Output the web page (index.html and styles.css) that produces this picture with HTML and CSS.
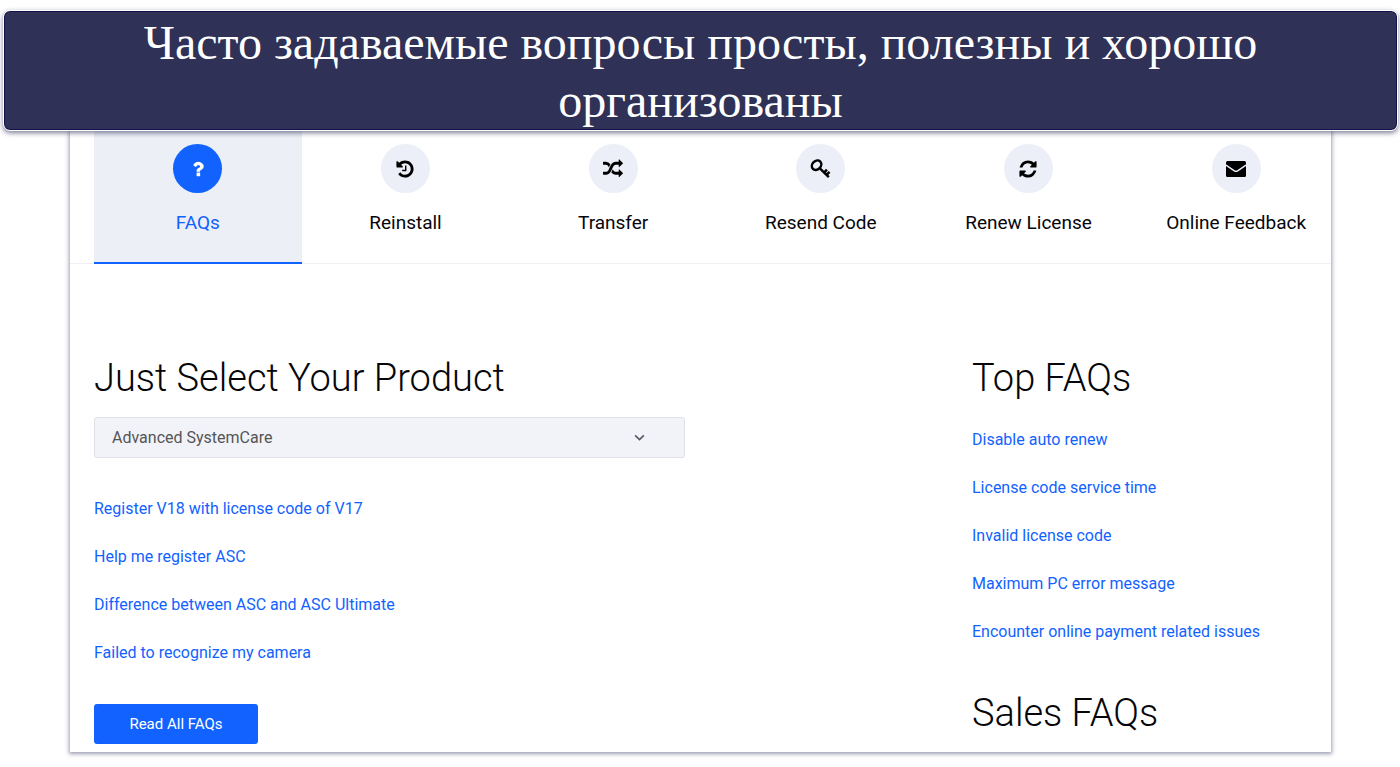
FILE: index.html
```html
<!DOCTYPE html>
<html lang="ru">
<head>
<meta charset="utf-8">
<title>FAQs</title>
<link rel="stylesheet" href="styles.css">
</head>
<body>
<header class="banner"><h1 class="banner-text">Часто задаваемые вопросы просты, полезны и хорошо организованы</h1></header>
<main class="panel">
  <nav class="tabs">
    <a class="tab tab-active" href="#faqs"><span class="tab-icon"><svg viewBox="0 0 1792 1792"><path d="M1088 1256v240q0 16-12 28t-28 12h-240q-16 0-28-12t-12-28v-240q0-16 12-28t28-12h240q16 0 28 12t12 28zm316-600q0 54-15.5 101t-35 76.5-55 59.5-57.5 43.5-61 35.5q-41 23-68.5 65t-27.5 67q0 17-12 32.5t-28 15.5h-240q-15 0-25.5-18.5t-10.5-37.5v-45q0-83 65-156.5t143-108.5q59-27 84-56t25-76q0-42-46.5-74t-107.5-32q-65 0-108 29-35 25-107 115-13 16-31 16-12 0-25-8l-164-125q-13-10-15.5-25t5.5-28q160-266 464-266 80 0 161 31t146 83 106 127.5 41 158.5z"/></svg></span>FAQs</a>
    <a class="tab" href="#reinstall"><span class="tab-icon"><svg viewBox="0 0 1792 1792"><path d="M1664 896q0 156-61 298t-164 245-245 164-298 61q-172 0-327-72.5t-264-204.5q-7-10-6.5-22.5t8.5-20.5l137-138q10-9 25-9 16 2 23 12 73 95 179 147t225 52q104 0 198.5-40.5t163.5-109.5 109.5-163.5 40.5-198.5-40.5-198.5-109.5-163.5-163.5-109.5-198.5-40.5q-98 0-188 35.5t-160 101.5l137 138q31 30 14 69-17 40-59 40h-448q-26 0-45-19t-19-45v-448q0-42 40-59 39-17 69 14l130 129q107-101 244.5-156.5t284.5-55.5q156 0 298 61t245 164 164 245 61 298zm-640-288v448q0 14-9 23t-23 9h-320q-14 0-23-9t-9-23v-64q0-14 9-23t23-9h224v-352q0-14 9-23t23-9h64q14 0 23 9t9 23z"/></svg></span>Reinstall</a>
    <a class="tab" href="#transfer"><span class="tab-icon"><svg viewBox="0 0 1792 1792"><path d="M666 481q-60 92-137 273-22-45-37-72.5t-40.5-63.5-51-56.5-63-35-81.5-14.5h-224q-14 0-23-9t-9-23v-192q0-14 9-23t23-9h224q250 0 410 225zm1126 799q0 14-9 23l-320 320q-9 9-23 9-13 0-22.5-9.5t-9.5-22.5v-192q-32 0-85 .5t-81 1-73-1-71-5-64-10.5-63-18.5-58-28.5-59-40-55-53.5-56-69.5q59-93 136-273 22 45 37 72.5t40.5 63.5 51 56.5 63 35 81.5 14.5h256v-192q0-14 9-23t23-9q12 0 24 10l319 319q9 9 9 23zm0-896q0 14-9 23l-320 320q-9 9-23 9-13 0-22.5-9.5t-9.5-22.5v-192h-256q-48 0-87 15t-69 45-51 61.5-45 77.5q-32 62-78 171-29 66-49.5 111t-54 105-64 100-74 83-90 68.5-106.5 42-128 16.5h-224q-14 0-23-9t-9-23v-192q0-14 9-23t23-9h224q48 0 87-15t69-45 51-61.5 45-77.5q32-62 78-171 29-66 49.5-111t54-105 64-100 74-83 90-68.5 106.5-42 128-16.5h256v-192q0-14 9-23t23-9q12 0 24 10l319 319q9 9 9 23z"/></svg></span>Transfer</a>
    <a class="tab" href="#resend"><span class="tab-icon"><svg viewBox="0 0 20 20"><g fill="none" stroke="currentColor" stroke-width="2.5"><ellipse cx="5.6" cy="6.2" rx="5.2" ry="4.2" transform="rotate(-45 5.6 6.2)"/><path d="M8.6 9.2L17.8 18.2M13.2 13.6l2.7-3M15.6 15.9l2.9-3"/></g></svg></span>Resend Code</a>
    <a class="tab" href="#renew"><span class="tab-icon"><svg viewBox="0 0 1792 1792"><path d="M1639 1056q0 5-1 7-64 268-268 434.5t-478 166.5q-146 0-282.5-55t-243.5-157l-129 129q-19 19-45 19t-45-19-19-45v-448q0-26 19-45t45-19h448q26 0 45 19t19 45-19 45l-137 137q71 66 161 102t187 36q134 0 250-65t186-179q11-17 53-117 8-23 30-23h192q13 0 22.5 9.5t9.5 22.5zm25-800v448q0 26-19 45t-45 19h-448q-26 0-45-19t-19-45 19-45l138-138q-148-137-349-137-134 0-250 65t-186 179q-11 17-53 117-8 23-30 23h-199q-13 0-22.5-9.5t-9.5-22.5v-7q65-268 270-434.5t480-166.5q146 0 284 55.5t245 156.5l130-129q19-19 45-19t45 19 19 45z"/></svg></span>Renew License</a>
    <a class="tab" href="#feedback"><span class="tab-icon"><svg viewBox="0 0 20 20"><rect y="2" width="20" height="16" rx="1.5"/><path d="M0 6.2l8.4 5.6q1.6 1 3.2 0L20 6.2" fill="none" stroke="#eceff8" stroke-width="1.4"/></svg></span>Online Feedback</a>
  </nav>
  <div class="content">
    <section class="products">
      <h2 class="heading"><label for="product">Just Select Your Product</label></h2>
      <div class="picker">
        <select class="picker-select" id="product"><option>Advanced SystemCare</option></select>
        <svg class="picker-arrow" viewBox="0 0 12 12"><path d="M2 4l4 4 4-4" fill="none" stroke="currentColor" stroke-width="1.5"/></svg>
      </div>
      <ul class="links">
        <li><a href="#r">Register V18 with license code of V17</a></li>
        <li><a href="#h">Help me register ASC</a></li>
        <li><a href="#d">Difference between ASC and ASC Ultimate</a></li>
        <li><a href="#f">Failed to recognize my camera</a></li>
      </ul>
      <button class="read-all" type="button">Read All FAQs</button>
    </section>
    <aside class="top-faqs">
      <h2 class="heading">Top FAQs</h2>
      <ul class="links">
        <li><a href="#a">Disable auto renew</a></li>
        <li><a href="#l">License code service time</a></li>
        <li><a href="#i">Invalid license code</a></li>
        <li><a href="#m">Maximum PC error message</a></li>
        <li><a href="#e">Encounter online payment related issues</a></li>
      </ul>
      <h2 class="heading">Sales FAQs</h2>
    </aside>
  </div>
</main>
</body>
</html>
```
FILE: styles.css
```css
* { box-sizing: border-box; }
body {
  margin: 0;
  padding-top: 10px;
  background: #fff;
  color: #06060a;
  font: 16px/24px Roboto, sans-serif;
}
a { color: #1262ff; text-decoration: none; }
.banner {
  position: relative;
  z-index: 1;
  margin: 0 2px -1px 3px;
  padding: 3px 60px 0;
  border: 1px solid #fff;
  border-radius: 7px;
  background: #2f3156;
  background-clip: padding-box;
  box-shadow: inset 0 0 0 1px #10104a, 0 2px 5px rgba(40, 42, 80, 0.6);
}
.banner-text {
  margin: 0;
  color: #fff;
  font: 48px/58px "Liberation Serif", serif;
  text-align: center;
}
.panel {
  margin: 0 69px 15px 70px;
  overflow: hidden;
  background: #fff;
  box-shadow: 0 1px 4px 1px rgba(60, 62, 100, 0.5);
}
.tabs {
  display: grid;
  grid-template-columns: repeat(6, 1fr);
  margin-right: -9px;
  padding-left: 24px;
  border-bottom: 1px solid #eeeff3;
}
.tab {
  display: flex;
  flex-direction: column;
  align-items: center;
  gap: 18px;
  margin-bottom: -1px;
  padding: 14px 0 27px;
  border-bottom: 2px solid transparent;
  color: #06060a;
  font-size: 19px;
  white-space: nowrap;
}
.tab-active {
  border-color: #1262ff;
  background: #eceff6;
  color: #1262ff;
}
.tab-icon {
  display: grid;
  place-items: center;
  width: 49px;
  height: 49px;
  border-radius: 50%;
  background: #eceff8;
  color: #000;
}
.tab-icon svg { width: 20px; height: 20px; fill: currentColor; overflow: visible; }
.tab-active .tab-icon { background: #1262ff; color: #fff; }
.content {
  display: grid;
  grid-template-columns: 878fr 359fr;
  padding: 90px 0 8px 24px;
}
.heading {
  margin: 0;
  font-size: 38px;
  font-weight: 300;
  line-height: 48px;
}
.picker {
  position: relative;
  width: 591px;
  max-width: 90%;
  margin: 15px 0 39px;
}
.picker-select {
  display: block;
  width: 100%;
  height: 41px;
  padding: 0 17px;
  border: 1px solid #dfe1e9;
  border-radius: 3px;
  appearance: none;
  background: #f2f3f8;
  color: #555;
  font: inherit;
}
.picker-arrow {
  position: absolute;
  top: 14px;
  right: 39px;
  width: 13px;
  height: 13px;
  color: #555a66;
  pointer-events: none;
}
.links {
  display: grid;
  gap: 24px;
  margin: 0;
  padding: 0;
  list-style: none;
}
.read-all {
  width: 164px;
  height: 40px;
  margin-top: 39px;
  border: 0;
  border-radius: 3px;
  background: #1262ff;
  color: #fff;
  font: 15px Roboto, sans-serif;
}
.top-faqs .links { margin: 26px 0 45px; }
```
